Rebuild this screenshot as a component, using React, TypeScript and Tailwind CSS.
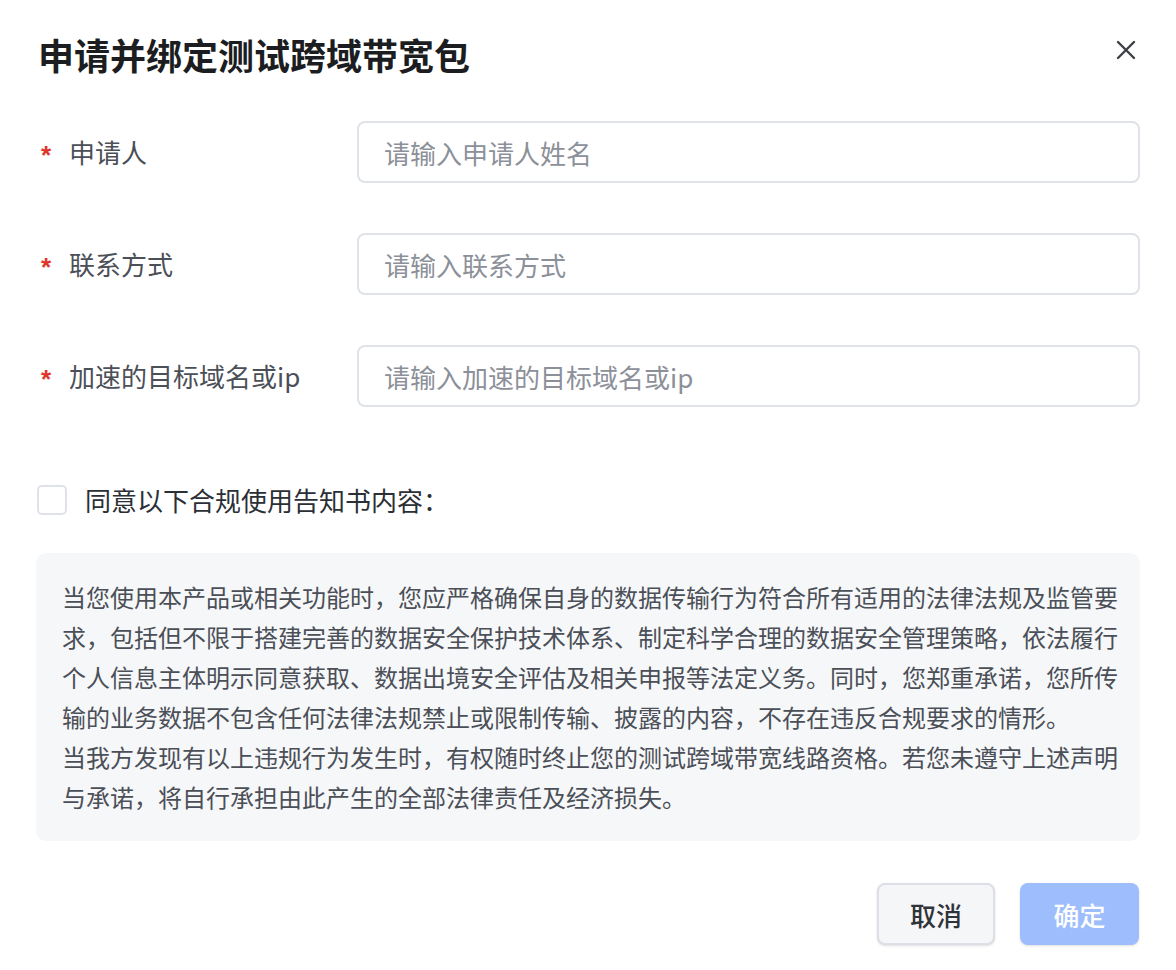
import { useState } from 'react';

const fontStack = "font-['Noto_Sans_CJK_SC','Noto_Sans',sans-serif]";

interface FieldProps {
    label: string;
    placeholder: string;
}

const fields: FieldProps[] = [
    { label: '申请人', placeholder: '请输入申请人姓名' },
    { label: '联系方式', placeholder: '请输入联系方式' },
    { label: '加速的目标域名或ip', placeholder: '请输入加速的目标域名或ip' },
];

const noticeLines = [
    '当您使用本产品或相关功能时，您应严格确保自身的数据传输行为符合所有适用的法律法规及监管要',
    '求，包括但不限于搭建完善的数据安全保护技术体系、制定科学合理的数据安全管理策略，依法履行',
    '个人信息主体明示同意获取、数据出境安全评估及相关申报等法定义务。同时，您郑重承诺，您所传',
    '输的业务数据不包含任何法律法规禁止或限制传输、披露的内容，不存在违反合规要求的情形。',
    '当我方发现有以上违规行为发生时，有权随时终止您的测试跨域带宽线路资格。若您未遵守上述声明',
    '与承诺，将自行承担由此产生的全部法律责任及经济损失。',
];

function FormRow({ label, placeholder }: FieldProps) {
    return (
        <div className="flex items-center">
            <label className="w-[321px] shrink-0 flex items-center pl-[5px] text-[26px] leading-[30px] text-[#4b4f57]">
                <span className="font-['Liberation_Sans',sans-serif] text-[#e0352b] text-[26px] font-bold w-[28px] pt-[6px]">
                    *
                </span>
                {label}
            </label>
            <input
                className="flex-1 h-[62px] rounded-[8px] border-2 border-[#dfe2e8] px-[25px] text-[26px] text-[#2b2f36] placeholder:text-[#8c9099] outline-none"
                placeholder={placeholder}
            />
        </div>
    );
}

export default function App() {
    const [agreed, setAgreed] = useState(false);

    return (
        <div className={`${fontStack} w-[1176px] h-[970px] bg-white px-[36px]`}>
            <div className="flex justify-between items-start pt-[34px]">
                <h1 className="pl-[2px] text-[36px] leading-[40px] font-bold text-[#1b1d21]">
                    申请并绑定测试跨域带宽包
                </h1>
                <button className="mt-[3px] mr-[1px] p-[3px] text-[#3b3f46]">
                    <svg width="20" height="20" viewBox="0 0 20 20">
                        <path
                            d="M2 2 L18 18 M18 2 L2 18"
                            stroke="currentColor"
                            strokeWidth="2.4"
                            strokeLinecap="round"
                        />
                    </svg>
                </button>
            </div>

            <div className="mt-[47px] flex flex-col gap-[50px]">
                {fields.map((f) => (
                    <FormRow key={f.label} {...f} />
                ))}
            </div>

            <div className="mt-[78px] flex items-center gap-[18px] pl-[1px]">
                <button
                    onClick={() => setAgreed(!agreed)}
                    className={`w-[30px] h-[30px] rounded-[5px] border-2 ${
                        agreed ? 'border-[#4d83f7] bg-[#4d83f7]' : 'border-[#dfe2e8] bg-white'
                    }`}
                />
                <span className="text-[26px] leading-[30px] text-[#2b2f36]">
                    同意以下合规使用告知书内容：
                </span>
            </div>

            <div className="mt-[38px] rounded-[10px] bg-[#f6f7f9] px-[26px] py-[24px] text-[24px] leading-[40px] text-[#4b4f57]">
                {noticeLines.map((line) => (
                    <div key={line} className="whitespace-nowrap">
                        {line}
                    </div>
                ))}
            </div>

            <div className="mt-[42px] flex justify-end gap-[25px] pr-[1px]">
                <button className="w-[118px] h-[62px] rounded-[8px] border-2 border-[#dcdfe5] bg-[#f5f6f8] text-[26px] font-medium text-[#2f333a] shadow-sm">
                    取消
                </button>
                <button
                    disabled={!agreed}
                    className="w-[119px] h-[62px] rounded-[8px] bg-[#9dbdfc] text-[26px] font-medium text-white shadow-sm"
                >
                    确定
                </button>
            </div>
        </div>
    );
}
